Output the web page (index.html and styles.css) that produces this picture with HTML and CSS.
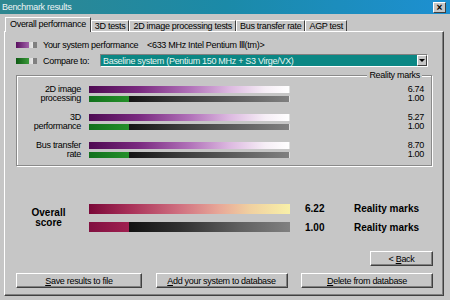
FILE: index.html
```html
<!DOCTYPE html>
<html lang="en">
<head>
    <meta charset="UTF-8">
    <meta name="viewport" content="width=device-width, initial-scale=1.0">
    <title>Benchmark results</title>
    <link rel="stylesheet" href="styles.css">
</head>
<body>
<div class="window">
    <div class="titlebar">
        <span class="title">Benchmark results</span>
        <span class="close">&times;</span>
    </div>

    <div class="tabs">
        <span class="tab active">Overall performance</span>
        <span class="tab">3D tests</span>
        <span class="tab">2D image processing tests</span>
        <span class="tab">Bus transfer rate</span>
        <span class="tab">AGP test</span>
    </div>

    <div class="panel">
        <!-- legend -->
        <div class="legend-row">
            <span class="swatch swatch-own"></span>
            <span class="legend-label">Your system performance</span>
            <span>&lt;633 MHz Intel Pentium &#8546;(tm)&gt;</span>
        </div>
        <div class="legend-row compare">
            <span class="swatch swatch-base"></span>
            <span class="legend-label short">Compare to:</span>
            <div class="select">
                <span class="select-text">Baseline system (Pentium 150 MHz + S3 Virge/VX)</span>
                <span class="drop"></span>
            </div>
        </div>

        <fieldset class="marks">
            <legend>Reality marks</legend>
            <div class="mark-row">
                <div class="mark-label">2D image<br>processing</div>
                <div class="bars"><div class="bar bar-own"></div><div class="bar bar-base"></div></div>
                <div class="mark-values"><div>6.74</div><div>1.00</div></div>
            </div>
            <div class="mark-row">
                <div class="mark-label">3D<br>performance</div>
                <div class="bars"><div class="bar bar-own"></div><div class="bar bar-base"></div></div>
                <div class="mark-values"><div>5.27</div><div>1.00</div></div>
            </div>
            <div class="mark-row">
                <div class="mark-label">Bus transfer<br>rate</div>
                <div class="bars"><div class="bar bar-own"></div><div class="bar bar-base"></div></div>
                <div class="mark-values"><div>8.70</div><div>1.00</div></div>
            </div>
        </fieldset>

        <!-- overall score -->
        <div class="score">
            <div class="score-label">Overall<br>score</div>
            <div class="score-bars"><div class="sbar sbar-own"></div><div class="sbar sbar-base"></div></div>
            <div class="score-values"><div>6.22</div><div>1.00</div></div>
            <div class="score-units"><div>Reality marks</div><div>Reality marks</div></div>
        </div>

        <div class="back-row">
            <button class="btn back">&lt; <u>B</u>ack</button>
        </div>
        <div class="actions">
            <button class="btn save"><u>S</u>ave results to file</button>
            <button class="btn wide"><u>A</u>dd your system to database</button>
            <button class="btn wide"><u>D</u>elete from database</button>
        </div>
    </div>
</div>
</body>
</html>
```

FILE: styles.css
```css
* {
    box-sizing: border-box;
}

body {
    margin: 0;
    background: #c6c6c6;
    font-family: "Liberation Sans", Arial, sans-serif;
    font-size: 9px;
    letter-spacing: -0.3px;
    color: #000;
    white-space: nowrap;
}

.window {
    width: 450px;
    height: 300px;
    background: #c6c6c6;
    overflow: hidden;
}

/* title bar */
.titlebar {
    height: 14px;
    display: flex;
    align-items: center;
    justify-content: space-between;
    padding: 0 4px 0 2px;
    background: linear-gradient(90deg, #2f8790 0%, #1b8aa8 50%, #1d90d2 100%);
    color: #eef4f4;
}

.close {
    width: 13px;
    height: 11px;
    background: #c6c6c6;
    border: 1px solid;
    border-color: #fff #404040 #404040 #fff;
    color: #000;
    font: bold 10px/9px "Liberation Sans", sans-serif;
    letter-spacing: 0;
    text-align: center;
}

/* tabs */
.tabs {
    display: flex;
    align-items: flex-end;
    height: 14px;
    margin-top: 3px;
    padding-left: 5px;
}

.tab {
    height: 11px;
    line-height: 10px;
    padding: 0 3px;
    border-top: 1px solid #fff;
    border-left: 1px solid #fff;
    border-right: 1px solid #404040;
}

.tab.active {
    height: 15px;
    line-height: 13px;
    padding: 0 4px;
    margin-bottom: -1px;
    background: #c6c6c6;
    position: relative;
}

.panel {
    margin-left: 4px;
    width: 440px;
    height: 265px;
    border: 1px solid;
    border-color: #fff #404040 #404040 #fff;
    box-shadow: inset -1px -1px 0 #808080;
    padding: 7px 10px 0 11px;
}

/* legend */
.legend-row {
    display: flex;
    align-items: center;
    height: 11px;
}

.legend-row.compare {
    margin-top: 4px;
    height: 13px;
}

.swatch {
    width: 21px;
    height: 6px;
    margin-right: 6px;
}

.swatch-own {
    background: linear-gradient(90deg, #5a1060 0%, #a060a8 62%, #d8d8d8 64%, #e8e8e8 80%, #808080 82%);
}

.swatch-base {
    background: linear-gradient(90deg, #0e5a14 0%, #3a9a3a 62%, #d8d8d8 64%, #e8e8e8 80%, #808080 82%);
}

.legend-label {
    width: 104px;
}

.legend-label.short {
    width: 57px;
}

.select {
    width: 328px;
    height: 13px;
    display: flex;
    align-items: center;
    border: 1px solid;
    border-color: #808080 #fff #fff #808080;
    background: #0b8784;
    color: #e8f4f0;
    padding-left: 2px;
}

.select-text {
    flex: 1;
}

.drop {
    width: 10px;
    height: 11px;
    background: #c6c6c6;
    border: 1px solid;
    border-color: #fff #404040 #404040 #fff;
    display: flex;
    align-items: center;
    justify-content: center;
}

.drop::after {
    content: "";
    border-left: 3px solid transparent;
    border-right: 3px solid transparent;
    border-top: 3px solid #000;
}

/* reality marks group */
.marks {
    margin: 3px 0 0;
    width: 416px;
    min-width: 0;
    border: 1px solid #8a8a8a;
    box-shadow: 1px 1px 0 #fff, inset 1px 1px 0 #fff;
    padding: 5px 7px 6px 0;
}

.marks legend {
    margin-left: auto;
    margin-right: 2px;
    padding: 0 2px;
    line-height: 10px;
    background: #c6c6c6;
}

.mark-row {
    display: flex;
    align-items: center;
    height: 18px;
}

.mark-row + .mark-row {
    margin-top: 10px;
}

.mark-label {
    width: 64px;
    margin-right: 8px;
    text-align: right;
    line-height: 9px;
}

.bars {
    width: 201px;
    display: flex;
    flex-direction: column;
    gap: 3px;
}

.bar {
    height: 7px;
}

.bar-own {
    background: linear-gradient(90deg, #4e0a52 0%, #7a2a80 25%, #b070b8 50%, #dcb8e0 70%, #f6eef6 88%, #fff 100%);
    border-right: 1px solid #e0e0e0;
}

.bar-base {
    height: 6px;
    background: linear-gradient(90deg, #12701c 0%, #24902a 20%, #141414 20%, #3a3a3a 45%, #666 80%, #808080 100%);
    border-right: 1px solid #e0e0e0;
}

.mark-values {
    flex: 1;
    text-align: right;
    line-height: 9px;
}

/* overall score */
.score {
    display: flex;
    align-items: center;
    margin-top: 37px;
    font-size: 10px;
    font-weight: bold;
    letter-spacing: 0;
}

.score-label {
    width: 65px;
    margin-right: 8px;
    text-align: center;
    line-height: 10px;
}

.score-bars {
    width: 201px;
    display: flex;
    flex-direction: column;
    gap: 8px;
}

.sbar {
    height: 10px;
}

.sbar-own {
    background: linear-gradient(90deg, #7a0838 0%, #a83058 20%, #d07080 45%, #e8a898 65%, #f0d0a0 80%, #f8f0a8 100%);
}

.sbar-base {
    background: linear-gradient(90deg, #801040 0%, #a02050 20%, #121212 20%, #303030 45%, #606060 75%, #808080 100%);
}

.score-values,
.score-units {
    display: flex;
    flex-direction: column;
    gap: 9px;
    padding-top: 1px;
    line-height: 10px;
}

.score-values {
    width: 49px;
    margin-left: 15px;
}

/* buttons */
.btn {
    height: 15px;
    padding: 0;
    font: inherit;
    letter-spacing: inherit;
    line-height: 12px;
    color: #000;
    background: #c6c6c6;
    border: 1px solid;
    border-color: #fff #404040 #404040 #fff;
    box-shadow: inset -1px -1px 0 #808080;
}

.back-row {
    display: flex;
    justify-content: flex-end;
    margin-top: 18px;
}

.back {
    width: 63px;
}

.actions {
    display: flex;
    justify-content: space-between;
    margin-top: 7px;
}

.save {
    width: 126px;
}

.wide {
    width: 132px;
}
```
